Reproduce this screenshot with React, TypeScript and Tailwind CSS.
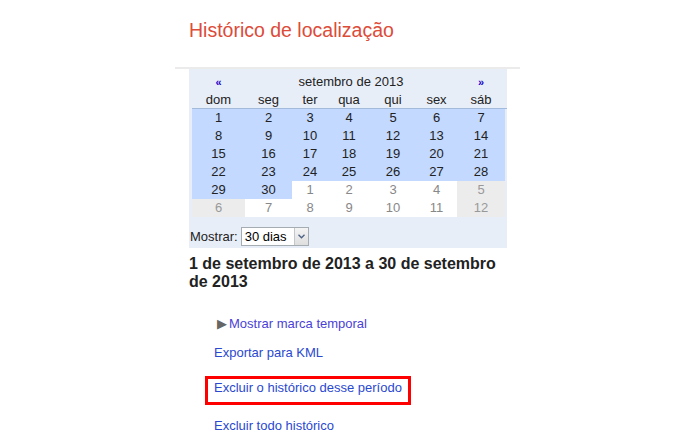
import React from "react";

type Day = { n: number; out?: boolean; weekend?: boolean };

const COLS = "grid-cols-[53px_47px_36px_42px_46px_41px_48px]";

const weeks: Day[][] = [
  [1, 2, 3, 4, 5, 6, 7].map((n) => ({ n })),
  [8, 9, 10, 11, 12, 13, 14].map((n) => ({ n })),
  [15, 16, 17, 18, 19, 20, 21].map((n) => ({ n })),
  [22, 23, 24, 25, 26, 27, 28].map((n) => ({ n })),
  [
    { n: 29 }, { n: 30 }, { n: 1, out: true }, { n: 2, out: true },
    { n: 3, out: true }, { n: 4, out: true }, { n: 5, out: true, weekend: true },
  ],
  [
    { n: 6, out: true, weekend: true }, { n: 7, out: true }, { n: 8, out: true },
    { n: 9, out: true }, { n: 10, out: true }, { n: 11, out: true },
    { n: 12, out: true, weekend: true },
  ],
];

const weekdays = ["dom", "seg", "ter", "qua", "qui", "sex", "sáb"];

const DayCell = ({ day }: { day: Day }) => {
  const bg = !day.out ? "bg-[#c3d9ff] text-[#222]" : day.weekend ? "bg-[#ececec] text-[#999]" : "bg-white text-[#888]";
  return <div className={`h-[18px] flex items-center justify-center ${bg}`}>{day.n}</div>;
};

const Calendar = () => (
  <div className="ml-[14px] w-[318px] bg-[#e8eef7] pt-[4px] pb-[2px]">
    <div className={`ml-[3px] grid ${COLS} text-[13px] leading-[16px]`}>
      <div className="h-[18px] flex items-center justify-center font-bold text-[11px] text-[#2200cc]">«</div>
      <div className="col-span-5 h-[18px] flex items-center justify-center text-[#222]">setembro de 2013</div>
      <div className="h-[18px] flex items-center justify-center font-bold text-[11px] text-[#2200cc]">»</div>
      {weekdays.map((w) => (
        <div key={w} className="h-[17px] flex items-center justify-center text-[#222]">{w}</div>
      ))}
    </div>
    <div className={`ml-[3px] grid ${COLS} border-t border-[#a2bbdd] text-[13px] leading-[16px]`}>
      {weeks.map((wk, i) => wk.map((d, j) => <DayCell key={`${i}-${j}`} day={d} />))}
    </div>
    <div className="mt-[10px] flex items-center text-[13px] leading-[16px] text-[#222]">
      <span className="ml-[1px] mr-[3px]">Mostrar:</span>
      <div className="flex h-[19px] w-[68px] items-stretch border border-[#a5acb2] bg-white">
        <span className="flex-1 pl-[3px] leading-[17px] text-black">30 dias</span>
        <span className="flex w-[14px] items-center justify-center border-l border-[#c2c7cc] bg-gradient-to-b from-[#f4f4f4] to-[#dedede]">
          <svg width="7" height="5" viewBox="0 0 7 5">
            <path d="M0.5 0.8 L3.5 3.8 L6.5 0.8" fill="none" stroke="#4d6185" strokeWidth="1.3" />
          </svg>
        </span>
      </div>
    </div>
  </div>
);

export default function App() {
  return (
    <div className="min-h-[447px] w-[695px] bg-white" style={{ fontFamily: '"Liberation Sans", Arial, sans-serif' }}>
      <div className="ml-[175px] w-[345px]">
        <h1 className="ml-[14px] pt-[18px] text-[19.5px] leading-[24px] text-[#dd4b39]">Histórico de localização</h1>
        <div className="mt-[25px] h-[2px] bg-[#ebebeb]" />
        <Calendar />
        <h2 className="ml-[14px] mt-[7px] w-[318px] text-[16px] font-bold leading-[18px] text-[#222]">
          1 de setembro de 2013 a 30 de setembro de 2013
        </h2>
        <div className="ml-[39px] text-[13px] leading-[16px]">
          <div className="mt-[25px] flex items-center">
            <span className="ml-[3px] mr-[2px] text-[13px] leading-[16px] text-[#666]">▶</span>
            <a className="text-[#4a3fd6]">Mostrar marca temporal</a>
          </div>
          <div className="mt-[13px]">
            <a className="text-[#2a48d0]">Exportar para KML</a>
          </div>
          <div className="mt-[15px] -ml-[9px] inline-block border-[3px] border-[#ff0000] pl-[6px] pr-[6px] pt-[1px] pb-[6px]">
            <a className="text-[#2a48d0]">Excluir o histórico desse período</a>
          </div>
          <div className="mt-[13px]">
            <a className="text-[#2a48d0]">Excluir todo histórico</a>
          </div>
        </div>
      </div>
    </div>
  );
}
